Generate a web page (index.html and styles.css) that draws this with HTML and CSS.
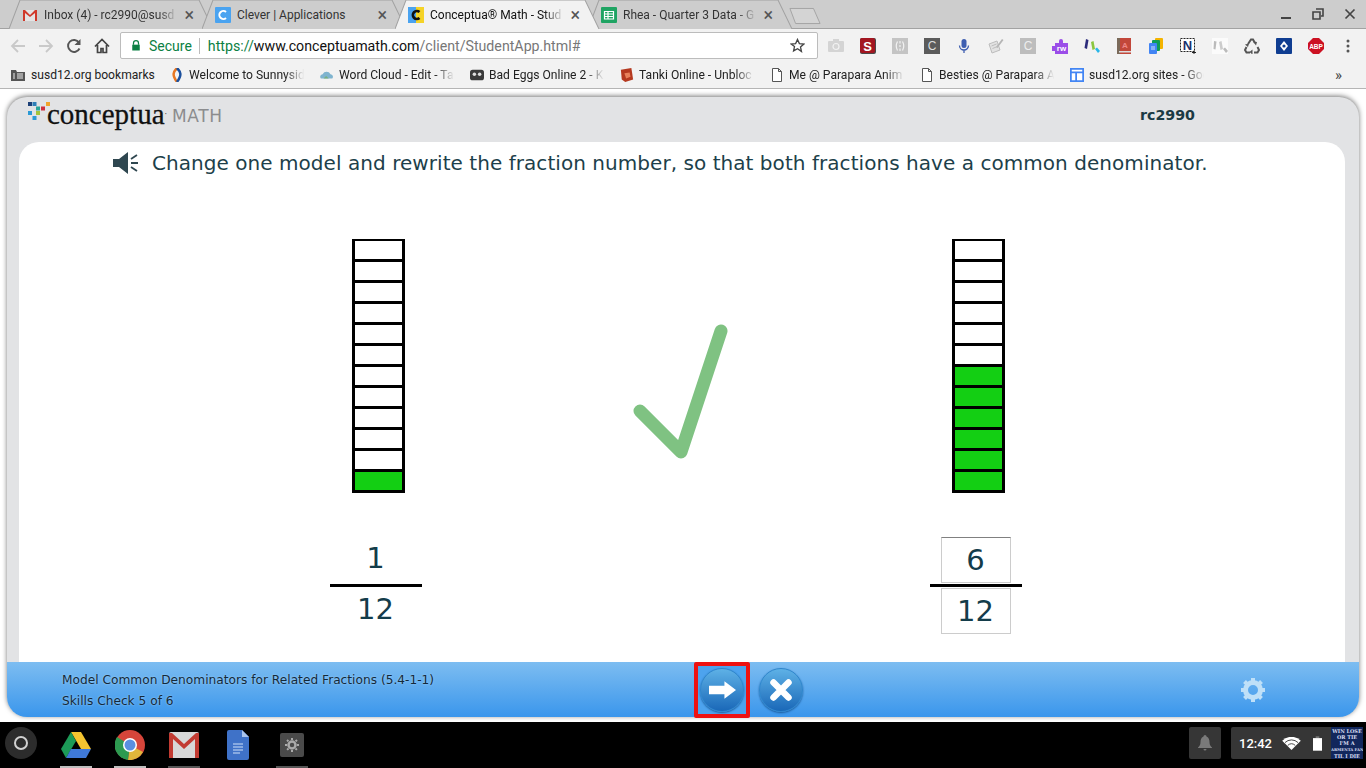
FILE: index.html
```html
<!DOCTYPE html>
<html lang="en">
<head>
  <meta charset="UTF-8">
  <title>Conceptua Math</title>
  <link rel="stylesheet" href="styles.css">
</head>
<body>
  <div class="tabstrip">
    <div class="tab">
      <svg class="tab-shape" viewBox="0 0 205 28" preserveAspectRatio="none"><path d="M0 28 L11 0 H190 L204 28" fill="#cdcdcd" stroke="#a2a2a2"/></svg>
      <svg class="favicon" viewBox="0 0 16 16"><path d="M1 3h14v11h-14z" fill="#e4e4e4"/><path d="M1 14V3h2l5 5 5-5h2v11h-2V6L8 10 3 6v8z" fill="#d0392b"/></svg>
      <span class="tab-title">Inbox (4) - rc2990@susd</span><span class="tab-close">&#215;</span>
    </div>
    <div class="tab">
      <svg class="tab-shape" viewBox="0 0 205 28" preserveAspectRatio="none"><path d="M0 28 L11 0 H190 L204 28" fill="#cdcdcd" stroke="#a2a2a2"/></svg>
      <svg class="favicon" viewBox="0 0 16 16"><rect width="16" height="16" rx="1" fill="#4aa3f0"/><path d="M11 5a4 4 0 1 0 0 6" fill="none" stroke="#fff" stroke-width="2"/></svg>
      <span class="tab-title tab-title-full">Clever | Applications</span><span class="tab-close">&#215;</span>
    </div>
    <div class="tab tab-active">
      <svg class="tab-shape" viewBox="0 0 205 28" preserveAspectRatio="none"><path d="M0 28 L11 0 H190 L204 28" fill="#f2f2f2" stroke="#a2a2a2"/></svg>
      <svg class="favicon" viewBox="0 0 16 16"><rect width="8" height="16" fill="#4aa3f0"/><rect x="8" width="8" height="16" fill="#f5d327"/><path d="M11.5 5a4 4 0 1 0 0 6" fill="none" stroke="#111" stroke-width="2.6"/></svg>
      <span class="tab-title">Conceptua&#174; Math - Stud</span><span class="tab-close">&#215;</span>
    </div>
    <div class="tab">
      <svg class="tab-shape" viewBox="0 0 205 28" preserveAspectRatio="none"><path d="M0 28 L11 0 H190 L204 28" fill="#cdcdcd" stroke="#a2a2a2"/></svg>
      <svg class="favicon" viewBox="0 0 16 16"><rect width="16" height="16" rx="1" fill="#1fa463"/><path d="M3.5 4.5h9v7.5h-9zM3.5 7h9M3.5 9.500h9M7 4.500V12" fill="none" stroke="#fff" stroke-width="1.2"/></svg>
      <span class="tab-title">Rhea - Quarter 3 Data - G</span><span class="tab-close">&#215;</span>
    </div>
    <svg class="newtab" viewBox="0 0 34 18"><path d="M1 1H26L33 17H7z" fill="#d4d4d4" stroke="#a2a2a2"/></svg>
    <div class="window-controls">
      <svg viewBox="0 0 12 12"><path d="M1 10h10" stroke="#444" stroke-width="2"/></svg>
      <svg viewBox="0 0 12 12"><path d="M4 1h7v7H9M1 4h7v7H1z" fill="none" stroke="#444" stroke-width="1.6"/></svg>
      <svg viewBox="0 0 12 12"><path d="M1.5 1.5l9 9M10.5 1.5l-9 9" stroke="#444" stroke-width="1.7"/></svg>
    </div>
  </div>

  <div class="toolbar">
    <div class="nav">
      <svg viewBox="0 0 16 16"><path d="M15 8H2M8 2L2 8l6 6" fill="none" stroke="#c9c9c9" stroke-width="1.8"/></svg>
      <svg viewBox="0 0 16 16"><path d="M1 8h13M8 2l6 6-6 6" fill="none" stroke="#c9c9c9" stroke-width="1.8"/></svg>
      <svg viewBox="0 0 16 16"><path d="M13.5 10.5A6 6 0 1 1 13 4.5" fill="none" stroke="#555" stroke-width="1.9"/><path d="M14.5 1v6h-6z" fill="#555"/></svg>
      <svg viewBox="0 0 16 16"><path d="M1 8.5L8 1.5l7 7M3.500 7v7.500h3.500v-4h2v4h3.500V7" fill="none" stroke="#444" stroke-width="1.700"/></svg>
    </div>
    <div class="omnibox">
      <svg class="lock" viewBox="0 0 12 14"><path d="M3 6V4a3 3 0 0 1 6 0v2" fill="none" stroke="#0b8043" stroke-width="1.5"/><rect x="1.5" y="6" width="9" height="7" fill="#0b8043"/></svg>
      <span class="secure">Secure</span>
      <span class="omni-sep"></span>
      <span class="url"><span class="url-scheme">https://</span><span class="url-host">www.conceptuamath.com</span>/client/StudentApp.html#</span>
      <svg class="star" viewBox="0 0 16 16"><path d="M8 1.500l2 4.400 4.800.5-3.600 3.200 1 4.700L8 11.400l-4.200 2.400 1-4.700L1.200 6.400 6 5.900z" fill="none" stroke="#444" stroke-width="1.400"/></svg>
    </div>
    <div class="extensions">
      <svg viewBox="0 0 16 16"><rect y="3" width="16" height="11" rx="1" fill="#d4d4d4"/><rect x="5" y="1" width="6" height="3" fill="#d4d4d4"/><circle cx="8" cy="8.500" r="3" fill="none" stroke="#f2f2f2" stroke-width="1.200"/></svg>
      <svg viewBox="0 0 16 16"><rect width="16" height="16" rx="2" fill="#4a4a4a"/><rect width="15" height="15" rx="2" fill="#a31621"/><text x="7.500" y="12.500" class="ext-text" fill="#fff">S</text></svg>
      <svg viewBox="0 0 16 16"><rect width="16" height="16" fill="#c4c4c4"/><path d="M5.500 3.500Q3 8 5.500 12.500M10.500 3.500Q13 8 10.500 12.500M8 3v2.500M8 7v2M8 10.500V13" fill="none" stroke="#f2f2f2" stroke-width="1.200"/></svg>
      <svg viewBox="0 0 16 16"><rect width="16" height="16" fill="#5b5b5b"/><text x="8" y="12" class="ext-plain" fill="#ddd">C</text></svg>
      <svg viewBox="0 0 16 16"><rect x="5.500" y="1" width="5" height="9" rx="2.500" fill="#3f5fb0"/><path d="M3.500 7.500a4.500 4.500 0 0 0 9 0M8 12v3" fill="none" stroke="#3f5fb0" stroke-width="1.300"/></svg>
      <svg viewBox="0 0 16 16"><path d="M1 6l8-3 3 9-8 3z" fill="#e2e2e2" stroke="#bdbdbd"/><path d="M8 9l6-8 1.500 1-6 8z" fill="#b5b5b5"/><path d="M3.500 8l5-2M4.500 10.500l5-2" stroke="#bdbdbd"/></svg>
      <svg viewBox="0 0 16 16"><rect width="16" height="16" fill="#bdbdbd"/><text x="8" y="12" class="ext-plain" fill="#eee">C</text></svg>
      <svg viewBox="0 0 16 16"><path d="M3 5h4V3a2 2 0 0 1 4 0v2h5v11H3v-3H0V8h3z" fill="#9b4de8"/><text x="9.500" y="13" class="ext-small" fill="#fff">rw</text></svg>
      <svg viewBox="0 0 16 16"><path d="M2 1l2.500 1-1.500 9-2.500-1z" fill="#2b2a7a"/><path d="M7 4l2.500-1 1.500 8-2.500 1z" fill="#8cc63f"/><path d="M11 11l2-1.500 3 3.500-2 2z" fill="#29b6e8"/></svg>
      <svg viewBox="0 0 16 16"><rect x="1" width="14" height="16" fill="#c2473a"/><rect x="1" width="3" height="16" fill="#7a6a5a"/><rect x="3" y="13" width="12" height="1.500" fill="#ddd"/><text x="9" y="10" class="ext-small" fill="#e88">A</text></svg>
      <svg viewBox="0 0 16 16"><rect x="7" y="0" width="8" height="11" rx="1" fill="#f4b400"/><rect x="4" y="2" width="8" height="11" rx="1" fill="#0f9d58"/><rect x="1" y="5" width="8" height="11" rx="1" fill="#4285f4"/><path d="M3 9h4M3 11h4" stroke="#cfe0f8"/></svg>
      <svg viewBox="0 0 16 16"><rect x=".5" y=".5" width="14" height="13" fill="#fff" stroke="#222" stroke-dasharray="2 1"/><text x="7.500" y="12" class="ext-text" fill="#1c2f6b">N</text><path d="M12 14.500h4M14 12.500v3.500" stroke="#222"/></svg>
      <svg viewBox="0 0 16 16"><rect width="16" height="16" fill="#fbfbfb"/><path d="M2 3l2.500.5-1 8-2-.5z" fill="#bbb"/><path d="M7 4l2.500-1 1.500 8-2.500 1z" fill="#ccc"/><path d="M11 11l2-1.500 3 3.500-2 2z" fill="#bbb"/></svg>
      <svg viewBox="0 0 16 16"><path d="M4 6l3-4.500h2L11 5M2.500 9L1 12l1.500 2.500H6M10 14.500h3.500L15 12l-1.500-3" fill="none" stroke="#555" stroke-width="2"/><path d="M9 3.500l4 .5-1 3.500zM4 9L1 6.500 5 5.500zM8.500 11.500v5L5.500 14z" fill="#555"/></svg>
      <svg viewBox="0 0 16 16"><rect width="16" height="16" rx="1" fill="#0f3d91"/><path d="M8 3l4 5-4 5-4-5z" fill="#fff"/><circle cx="8" cy="8" r="1.600" fill="#0f3d91"/></svg>
      <svg viewBox="0 0 16 16"><path d="M5 0h6l5 5v6l-5 5H5l-5-5V5z" fill="#cc1122"/><text x="8" y="10.500" class="ext-abp" fill="#fff">ABP</text></svg>
      <svg class="kebab" viewBox="0 0 16 16"><circle cx="8" cy="3" r="1.500" fill="#555"/><circle cx="8" cy="8" r="1.500" fill="#555"/><circle cx="8" cy="13" r="1.500" fill="#555"/></svg>
    </div>
  </div>

  <div class="bookmarks">
    <div class="bookmark bookmark-folder">
      <svg viewBox="0 0 14 14"><path d="M0 2h5l1 2h8v9H0z" fill="#555"/><path d="M6 6h6M6 8h6M6 10h6M2 6h2M2 8h2M2 10h2" stroke="#eee"/></svg>
      <span>susd12.org bookmarks</span>
    </div>
    <div class="bookmark">
      <svg viewBox="0 0 14 14"><path d="M7 0C3 4 2 7 7 14" fill="none" stroke="#e87722" stroke-width="2.500"/><path d="M7 0c4 4 5 7 0 14" fill="none" stroke="#1b4f9c" stroke-width="2.500"/></svg>
      <span class="bookmark-title">Welcome to Sunnysid</span>
    </div>
    <div class="bookmark">
      <svg viewBox="0 0 16 14"><path d="M1 11a3 3 0 0 1 2-5 5 5 0 0 1 9 0 3 3 0 0 1 2 5z" fill="#7fb4cf"/><path d="M4 11l3-3 3 3z" fill="#79b07f"/></svg>
      <span class="bookmark-title">Word Cloud - Edit - Ta</span>
    </div>
    <div class="bookmark">
      <svg viewBox="0 0 16 14"><rect y="1" width="16" height="12" rx="3" fill="#3a3a3a"/><circle cx="5" cy="6" r="2" fill="#ddd"/><circle cx="11" cy="6" r="2" fill="#ddd"/></svg>
      <span class="bookmark-title">Bad Eggs Online 2 - K</span>
    </div>
    <div class="bookmark">
      <svg viewBox="0 0 16 16"><path d="M1 2l12-2 2 13-9 3-4-3z" fill="#b5391f"/><path d="M5 6l6-1 1 5-5 2z" fill="#e8805a"/></svg>
      <span class="bookmark-title">Tanki Online - Unbloc</span>
    </div>
    <div class="bookmark">
      <svg viewBox="0 0 12 14"><path d="M1.500 .5h6l3 3v10h-9zM7.500 .5v3h3" fill="#fff" stroke="#555"/></svg>
      <span class="bookmark-title">Me @ Parapara Anim</span>
    </div>
    <div class="bookmark">
      <svg viewBox="0 0 12 14"><path d="M1.500 .5h6l3 3v10h-9zM7.500 .5v3h3" fill="#fff" stroke="#555"/></svg>
      <span class="bookmark-title">Besties @ Parapara A</span>
    </div>
    <div class="bookmark">
      <svg viewBox="0 0 16 16"><rect x="1" y="1" width="14" height="14" fill="#fff" stroke="#4285f4" stroke-width="2"/><path d="M1 5h14M7 5v10" stroke="#4285f4" stroke-width="2"/></svg>
      <span class="bookmark-title">susd12.org sites - Goo</span>
    </div>
    <span class="bookmark-more">&#187;</span>
  </div>

  <main class="page">
    <div class="app">
      <header class="app-head">
        <div class="logo">
          <svg class="logo-mark" viewBox="0 0 24 20">
            <rect x="0" y="0" width="4" height="4" fill="#1c3f77"/>
            <rect x="4.500" y="0" width="4" height="4" fill="#2e7fb8"/>
            <rect x="18" y="0" width="4" height="4" fill="#f0a32a"/>
            <rect x="8" y="4.500" width="4" height="4" fill="#2aa59a"/>
            <rect x="13" y="4.500" width="4" height="4" fill="#cf2f3c"/>
            <rect x="0" y="9" width="4" height="4" fill="#2a9ad6"/>
            <rect x="8" y="9" width="4" height="4" fill="#a3c43b"/>
            <rect x="4.500" y="14" width="4" height="4" fill="#2a9ad6"/>
          </svg>
          <span class="logo-word">conceptua</span><span class="logo-reg">&#183;</span>
          <span class="logo-math">MATH</span>
        </div>
        <span class="username">rc2990</span>
      </header>

      <section class="card">
        <div class="prompt">
          <svg class="speaker" viewBox="0 0 26 22"><path d="M0 7h6l9-7v22l-9-7H0z" fill="#2f4750"/><path d="M18 7l6-4M18 11h7M18 15l6 4" stroke="#2f4750" stroke-width="1.800"/></svg>
          <span>Change one model and rewrite the fraction number, so that both fractions have a common denominator.</span>
        </div>

        <div class="models">
          <div class="model">
            <div class="bar">
              <i></i><i></i><i></i><i></i><i></i><i></i><i></i><i></i><i></i><i></i><i></i><i class="on"></i>
            </div>
            <div class="fraction">
              <div class="num plain">1</div>
              <div class="rule"></div>
              <div class="den plain">12</div>
            </div>
          </div>

          <div class="check-col">
            <svg class="check" viewBox="0 0 96 140"><path d="M7 87L48 128L88 7" fill="none" stroke="#7fc282" stroke-width="13" stroke-linecap="round" stroke-linejoin="round"/></svg>
          </div>

          <div class="model">
            <div class="bar">
              <i></i><i></i><i></i><i></i><i></i><i></i><i class="on"></i><i class="on"></i><i class="on"></i><i class="on"></i><i class="on"></i><i class="on"></i>
            </div>
            <div class="fraction">
              <div class="num box box-top">6</div>
              <div class="rule"></div>
              <div class="den box">12</div>
            </div>
          </div>
        </div>
      </section>

      <footer class="app-foot">
        <div class="foot-text">
          <div>Model Common Denominators for Related Fractions (5.4-1-1)</div>
          <div>Skills Check 5 of 6</div>
        </div>
        <div class="foot-buttons">
          <div class="highlight">
            <div class="round-btn">
              <svg viewBox="0 0 28 18"><path d="M0 4.500h16V0l12 9-12 9v-4.500H0z" fill="#fff"/></svg>
            </div>
          </div>
          <div class="round-btn">
            <svg viewBox="0 0 22 22"><path d="M3.500 3.500l15 15M18.500 3.500l-15 15" stroke="#fff" stroke-width="6.500" stroke-linecap="round"/></svg>
          </div>
        </div>
        <svg class="gear" viewBox="0 0 26 26">
          <circle cx="13" cy="13" r="7.500" fill="none" stroke="#bfe0f8" stroke-width="5"/>
          <path d="M13 1v24M1 13h24M4.500 4.500l17 17M21.500 4.500l-17 17" stroke="#bfe0f8" stroke-width="4" stroke-dasharray="4.500 15 4.500"/>
        </svg>
      </footer>
    </div>
  </main>

  <div class="shelf">
    <div class="launcher"><span></span></div>
    <div class="shelf-apps">
      <div class="shelf-app running">
        <svg viewBox="0 0 30 26"><path d="M10 0h10l10 17H20z" fill="#f4c430"/><path d="M10 0L0 17l5 9L15 9z" fill="#1c9a57"/><path d="M5 26h20l5-9H10z" fill="#3f79d8"/></svg>
      </div>
      <div class="shelf-app running">
        <svg viewBox="0 0 30 30"><circle cx="15" cy="15" r="15" fill="#d6453a"/><path d="M15 15L28 22A15 15 0 0 1 13 30z" fill="#e0b63a"/><path d="M15 15L13 30A15 15 0 0 1 2 7z" fill="#2d9a50"/><circle cx="15" cy="15" r="7" fill="#fff"/><circle cx="15" cy="15" r="5.500" fill="#5a8fe0"/></svg>
      </div>
      <div class="shelf-app dim">
        <svg viewBox="0 0 30 26"><rect width="30" height="26" rx="2" fill="#d8d8d8"/><path d="M0 26V1h3l12 11L27 1h3v25h-4V7L15 17 4 7v19z" fill="#c23b32"/></svg>
      </div>
      <div class="shelf-app">
        <svg viewBox="0 0 22 30"><path d="M2 0h13l7 7v21a2 2 0 0 1-2 2H2a2 2 0 0 1-2-2V2a2 2 0 0 1 2-2z" fill="#3f72c8"/><path d="M15 0l7 7h-7z" fill="#a9c4ee"/><path d="M6 14h10M6 17h10M6 20h10M6 23h7" stroke="#cfe0f8"/></svg>
      </div>
      <div class="shelf-app dim shelf-settings">
        <svg viewBox="0 0 24 24"><rect width="24" height="24" rx="2" fill="#4a4a4a"/><circle cx="12" cy="12" r="3.500" fill="none" stroke="#aaa" stroke-width="2.500"/><path d="M12 5v14M5 12h14M7 7l10 10M17 7L7 17" stroke="#aaa" stroke-width="2" stroke-dasharray="2 10 2"/></svg>
      </div>
    </div>
    <div class="tray">
      <div class="tray-box bell">
        <svg viewBox="0 0 14 16"><path d="M7 0a1.500 1.500 0 0 1 1.500 1.500C11 2.500 11.500 5 11.500 7c0 3 1 4 2.500 5.500V13H0v-.500C1.500 11 2.500 10 2.500 7c0-2 .5-4.500 3-5.500A1.500 1.500 0 0 1 7 0zM5.500 14h3a1.500 1.500 0 0 1-3 0z" fill="#7a7a7a"/></svg>
      </div>
      <div class="tray-box status">
        <span class="clock">12:42</span>
        <svg class="wifi" viewBox="0 0 20 14"><path d="M0 4a14 14 0 0 1 20 0l-10 10z" fill="#fff"/><path d="M3 6a10 10 0 0 1 14 0M6 9a6 6 0 0 1 8 0" fill="none" stroke="#3a3a3a"/></svg>
        <svg class="battery" viewBox="0 0 10 16"><rect x="3" width="4" height="2" fill="#777"/><rect y="2" width="10" height="14" fill="#fff"/></svg>
        <div class="wallpaper">WIN LOSE<br>OR TIE<br>I'M A<br><span class="wallpaper-small">ARMENTA FAN</span><br>TIL I DIE</div>
      </div>
    </div>
  </div>
</body>
</html>
```

FILE: styles.css
```css
* {
  box-sizing: border-box;
}

html,
body {
  margin: 0;
  height: 768px;
  overflow: hidden;
}

body {
  background-color: #ffffff;
  font-family: Roboto, sans-serif;
  color: #222222;
  display: flex;
  flex-direction: column;
}

svg {
  display: block;
  flex: none;
}

/* browser chrome */
.tabstrip {
  height: 29px;
  background-color: #cdcdcd;
  border-bottom: 1px solid #a2a2a2;
  display: flex;
  padding-left: 9px;
  flex: none;
}

.tab {
  position: relative;
  width: 205px;
  height: 29px;
  margin-right: -12px;
  padding: 0 20px 0 13px;
  display: flex;
  align-items: center;
  gap: 6px;
  font-size: 12px;
  color: #333333;
}

.tab-active {
  z-index: 2;
  color: #111111;
}

.tab-shape {
  position: absolute;
  top: 0;
  left: 0;
  width: 100%;
  height: 29px;
}

.favicon {
  position: relative;
  width: 16px;
  height: 16px;
}

.tab-title {
  position: relative;
  flex: 1;
  min-width: 0;
  white-space: nowrap;
  overflow: hidden;
  -webkit-mask-image: linear-gradient(to right, #000 85%, transparent);
  mask-image: linear-gradient(to right, #000 85%, transparent);
}

.tab-title-full {
  -webkit-mask-image: none;
  mask-image: none;
}

.tab-close {
  position: relative;
  font-size: 18px;
  line-height: 16px;
  color: #555555;
}

.newtab {
  width: 32px;
  height: 18px;
  margin: 7px 0 0 8px;
}

.window-controls {
  margin-left: auto;
  padding: 8px 10px 0 0;
  display: flex;
  gap: 20px;
}

.window-controls svg {
  width: 12px;
  height: 12px;
}

.toolbar {
  height: 33px;
  background-color: #f2f2f2;
  display: flex;
  align-items: center;
  flex: none;
}

.nav {
  display: flex;
  gap: 12px;
  padding-left: 10px;
  width: 120px;
}

.nav svg {
  width: 16px;
  height: 16px;
}

.omnibox {
  width: 698px;
  height: 27px;
  background-color: #ffffff;
  border: 1px solid #bcbcbc;
  border-radius: 2px;
  display: flex;
  align-items: center;
  font-size: 14px;
  padding: 0 12px 0 10px;
}

.lock {
  width: 10px;
  height: 13px;
}

.secure {
  color: #0b8043;
  margin-left: 8px;
}

.omni-sep {
  width: 1px;
  height: 16px;
  background-color: #bcbcbc;
  margin: 0 8px 0 7px;
}

.url {
  color: #777777;
  flex: 1;
  font-size: 14.200px;
  white-space: nowrap;
}

.url-scheme {
  color: #0b8043;
}

.url-host {
  color: #111111;
}

.star {
  width: 15px;
  height: 15px;
}

.extensions {
  display: flex;
  gap: 16px;
  padding-left: 10px;
}

.extensions svg {
  width: 16px;
  height: 16px;
}

.ext-text {
  font: bold 13px "Liberation Sans", sans-serif;
  text-anchor: middle;
}

.ext-plain {
  font: 12px "Liberation Sans", sans-serif;
  text-anchor: middle;
}

.ext-small {
  font: bold 8px "Liberation Sans", sans-serif;
  text-anchor: middle;
}

.ext-abp {
  font: bold 6.500px "Liberation Sans", sans-serif;
  text-anchor: middle;
}

.bookmarks {
  height: 27px;
  background-color: #f2f2f2;
  border-bottom: 1px solid #b5b5b5;
  display: flex;
  align-items: center;
  padding-left: 11px;
  font-size: 12.100px;
  flex: none;
  position: relative;
}

.bookmark {
  width: 150px;
  flex: none;
  display: flex;
  align-items: center;
  gap: 5px;
}

.bookmark-folder {
  width: 159px;
  gap: 6px;
}

.bookmark svg {
  width: 14px;
  height: 14px;
}

.bookmark-title {
  width: 120px;
  white-space: nowrap;
  overflow: hidden;
  -webkit-mask-image: linear-gradient(to right, #000 80%, transparent 96%);
  mask-image: linear-gradient(to right, #000 80%, transparent 96%);
}

.bookmark-more {
  margin-left: auto;
  padding-right: 24px;
  font-size: 15px;
  color: #444444;
}

/* conceptua app */
.page {
  height: 633px;
  padding: 8px 7px 5px;
  flex: none;
}

.app {
  height: 100%;
  border-radius: 20px;
  background-color: #e2e3e5;
  box-shadow: 0 -1px 5px #777777;
  display: flex;
  flex-direction: column;
  font-family: "DejaVu Sans", sans-serif;
  color: #173a45;
}

.app-head {
  height: 45px;
  display: flex;
  justify-content: space-between;
  padding: 4px 164px 0 21px;
  flex: none;
}

.logo {
  display: flex;
  align-items: center;
  height: 26px;
}

.logo-mark {
  width: 24px;
  height: 20px;
  margin: -5px -5px 0 0;
}

.logo-word {
  font-family: "Liberation Serif", serif;
  font-size: 29px;
  color: #111111;
  -webkit-text-stroke: .3px #111111;
}

.logo-reg {
  font-size: 8px;
  color: #444444;
}

.logo-math {
  font-size: 17px;
  letter-spacing: .6px;
  color: #8b8c8e;
  margin: 4px 0 0 5px;
}

.username {
  font-size: 14.200px;
  font-weight: bold;
  line-height: 28px;
  color: #1b3a44;
}

.card {
  flex: 1;
  margin: 0 14px 0 12px;
  background-color: #ffffff;
  border-radius: 20px 20px 0 0;
  padding-top: 9px;
  min-height: 0;
}

.prompt {
  display: flex;
  align-items: center;
  height: 24px;
  padding-left: 94px;
  gap: 13px;
  font-size: 20px;
  letter-spacing: .05px;
  white-space: nowrap;
  color: #1d3f4a;
}

.speaker {
  width: 26px;
  height: 22px;
}

.models {
  display: flex;
  padding: 64px 0 0 259px;
}

.model {
  width: 200px;
  display: flex;
  flex-direction: column;
  align-items: center;
}

.bar {
  width: 53px;
  height: 254px;
  border: 3px solid #000000;
  border-top-width: 2px;
  display: flex;
  flex-direction: column;
}

.bar i {
  display: block;
  flex: 1;
  border-top: 3px solid #000000;
}

.bar i:first-child {
  border-top: none;
}

.bar i.on {
  background-color: #13cf13;
}

.fraction {
  margin: 44px 5px 0 0;
  width: 92px;
  display: flex;
  flex-direction: column;
  align-items: center;
  font-size: 29px;
  color: #143c4a;
}

.num,
.den {
  width: 70px;
  height: 46px;
  display: flex;
  align-items: center;
  justify-content: center;
}

.plain {
  padding-bottom: 4px;
}

.rule {
  width: 92px;
  height: 3px;
  background-color: #000000;
  margin: 1px 0;
}

.box {
  border: 1px solid #cccccc;
}

.box-top {
  border-top-color: #808080;
}

.check-col {
  width: 400px;
  display: flex;
  justify-content: center;
  padding-top: 85px;
}

.check {
  width: 96px;
  height: 140px;
  margin-left: 6px;
}

.app-foot {
  height: 55px;
  flex: none;
  border-radius: 0 0 20px 20px;
  background: linear-gradient(#7dbdf1, #3a96ec);
  display: flex;
  align-items: center;
  position: relative;
  padding: 0 93px 0 55px;
}

.foot-text {
  width: 632px;
  padding-top: 3px;
  font-size: 12.200px;
  line-height: 21px;
  color: #12293a;
  text-shadow: 0 0 2px #a8d4f7;
}

.foot-buttons {
  display: flex;
  align-items: center;
  gap: 9px;
}

.highlight {
  width: 56px;
  height: 56px;
  border: 4px solid #ee1111;
  border-radius: 2px;
  display: flex;
  align-items: center;
  justify-content: center;
  background-color: #4da3ee;
}

.round-btn {
  width: 44px;
  height: 44px;
  border-radius: 50%;
  background: linear-gradient(#5eb1e6, #1a68b8);
  border: 1px solid #2f86cc;
  box-shadow: 0 1px 2px #1a5a9a;
  display: flex;
  align-items: center;
  justify-content: center;
}

.highlight .round-btn svg {
  width: 27px;
  height: 18px;
}

.round-btn svg {
  width: 22px;
  height: 22px;
}

.gear {
  width: 26px;
  height: 26px;
  margin-left: auto;
}

/* chromeos shelf */
.shelf {
  height: 46px;
  background-color: #000000;
  display: flex;
  position: relative;
  flex: none;
}

.launcher {
  width: 32px;
  height: 32px;
  margin: 5px 0 0 5px;
  border-radius: 50%;
  background-color: #2c2c2c;
  display: flex;
  align-items: center;
  justify-content: center;
}

.launcher span {
  width: 14px;
  height: 14px;
  border: 2px solid #d0d0d0;
  border-radius: 50%;
}

.shelf-apps {
  display: flex;
  margin-left: 23px;
}

.shelf-app {
  width: 32px;
  height: 46px;
  margin-right: 22px;
  display: flex;
  align-items: center;
  justify-content: center;
  border-bottom: 2px solid transparent;
  padding-top: 2px;
}

.shelf-app svg {
  width: 30px;
  height: 30px;
}

.shelf-settings svg {
  width: 24px;
  height: 24px;
}

.running {
  border-bottom-color: #bdbdbd;
}

.dim {
  border-bottom-color: #555555;
}

.tray {
  margin-left: auto;
  padding: 5px 3px 0 0;
  display: flex;
  gap: 10px;
}

.tray-box {
  height: 32px;
  background-color: #363636;
  border-radius: 2px;
  display: flex;
  align-items: center;
}

.bell {
  width: 32px;
  justify-content: center;
}

.bell svg {
  width: 14px;
  height: 16px;
}

.status {
  width: 132px;
  padding-left: 8px;
  color: #ffffff;
}

.clock {
  flex: none;
  width: 31px;
  font-size: 13px;
  font-weight: 500;
  white-space: nowrap;
}

.wifi {
  width: 19px;
  height: 13px;
  margin-left: 12px;
}

.battery {
  width: 9px;
  height: 15px;
  margin: 0 9px 0 12px;
}

.wallpaper {
  flex: none;
  width: 32px;
  height: 32px;
  padding-top: 1px;
  background-color: #12275c;
  color: #d9def0;
  font: bold 5px/6px "DejaVu Serif", serif;
  text-align: center;
  white-space: nowrap;
  overflow: hidden;
}

.wallpaper-small {
  font-size: 3.800px;
}
```
